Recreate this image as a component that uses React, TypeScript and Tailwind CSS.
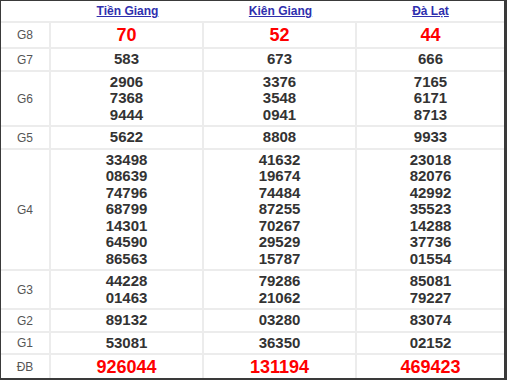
// Lottery results table: three provinces, prize rows G8 down to ĐB.

const provinces = ["Tiền Giang", "Kiên Giang", "Đà Lạt"];

type Row = { label: string; h: string; big?: boolean; values: string[][] };

const rows: Row[] = [
  { label: "G8", h: "h-[26px]", big: true, values: [["70"], ["52"], ["44"]] },
  { label: "G7", h: "h-[23px]", values: [["583"], ["673"], ["666"]] },
  {
    label: "G6",
    h: "h-[55px]",
    values: [
      ["2906", "7368", "9444"],
      ["3376", "3548", "0941"],
      ["7165", "6171", "8713"],
    ],
  },
  { label: "G5", h: "h-[23px]", values: [["5622"], ["8808"], ["9933"]] },
  {
    label: "G4",
    h: "h-[121px]",
    values: [
      ["33498", "08639", "74796", "68799", "14301", "64590", "86563"],
      ["41632", "19674", "74484", "87255", "70267", "29529", "15787"],
      ["23018", "82076", "42992", "35523", "14288", "37736", "01554"],
    ],
  },
  {
    label: "G3",
    h: "h-[39px]",
    values: [
      ["44228", "01463"],
      ["79286", "21062"],
      ["85081", "79227"],
    ],
  },
  { label: "G2", h: "h-[23px]", values: [["89132"], ["03280"], ["83074"]] },
  { label: "G1", h: "h-[22px]", values: [["53081"], ["36350"], ["02152"]] },
  { label: "ĐB", h: "h-[24px]", big: true, values: [["926044"], ["131194"], ["469423"]] },
];

export default function App() {
  return (
    <div className="h-[380px] w-[507px] overflow-hidden border-t border-l border-r-[3px] border-b-2 border-[#3a3a3a] bg-white font-['Liberation_Sans',Arial,sans-serif]">
      <div className="grid h-[22px] grid-cols-[50px_153px_153px_1fr] border-b-2 border-[#ececec]">
        <div />
        {provinces.map((p) => (
          <div key={p} className="flex items-center justify-center">
            <a href="#" className="text-[12px] font-bold text-[#2f2fae] underline">
              {p}
            </a>
          </div>
        ))}
      </div>
      {rows.map((r) => (
        <div
          key={r.label}
          className={`grid grid-cols-[50px_153px_153px_1fr] border-b-2 border-[#ececec] last:border-b-0 ${r.h}`}
        >
          <div className="flex items-center justify-center border-r-2 border-[#ececec] text-[12px] text-[#555]">
            {r.label}
          </div>
          {r.values.map((vals, i) => (
            <div
              key={i}
              className={`flex flex-col items-center justify-center ${i < 2 ? "border-r-2 border-[#ececec]" : ""}`}
            >
              {vals.map((v) => (
                <span
                  key={v}
                  className={
                    r.big
                      ? "text-[18px] font-bold leading-[20px] text-[#ff0000]"
                      : "text-[15px] font-bold leading-[16.5px] text-[#333]"
                  }
                >
                  {v}
                </span>
              ))}
            </div>
          ))}
        </div>
      ))}
    </div>
  );
}
